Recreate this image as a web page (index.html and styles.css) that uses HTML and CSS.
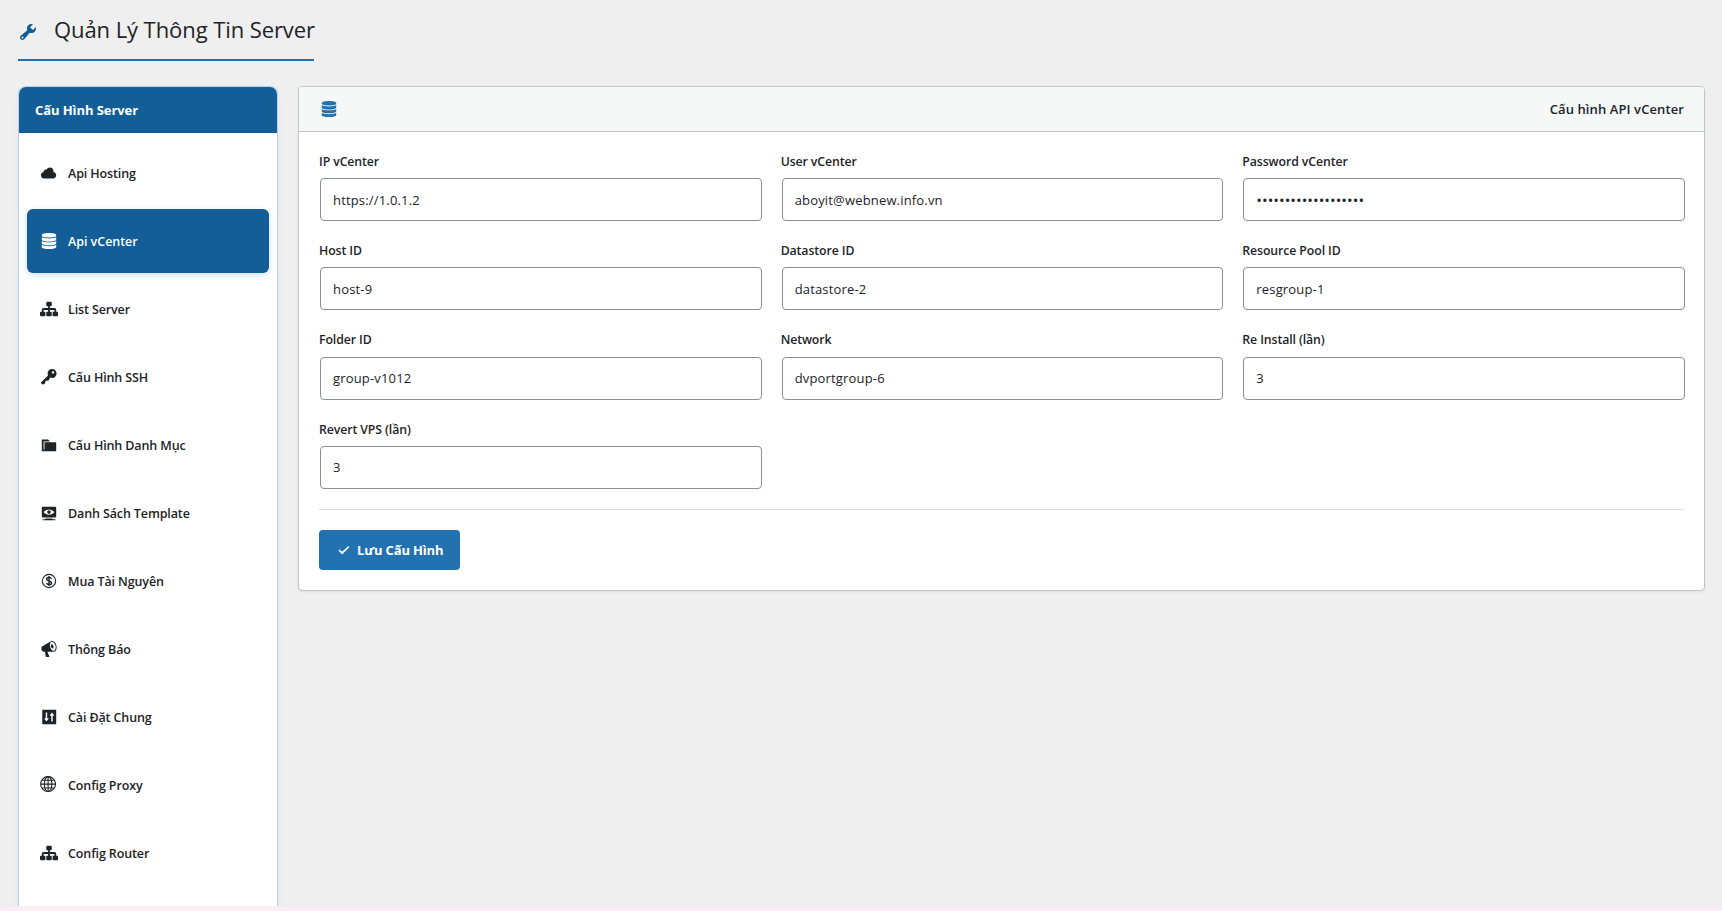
FILE: index.html
```html
<!DOCTYPE html>
<html lang="vi">

	<head>
		<meta charset="UTF-8">
		<title>Quản Lý Thông Tin Server</title>
		<link rel="stylesheet" href="styles.css">
	</head>

	<body>
		<!-- icons -->
		<svg class="sprite" xmlns="http://www.w3.org/2000/svg">
			<symbol id="i-tools" viewBox="0 0 20 20">
				<path d="M16.68 9.77c-1.34 1.34-3.3 1.67-4.95.99l-5.41 6.52c-.99.99-2.59.99-3.58 0s-.99-2.59 0-3.57l6.52-5.42c-.68-1.65-.35-3.61.99-4.95 1.28-1.28 3.12-1.62 4.72-1.06l-2.89 2.89 2.82 2.82 2.86-2.87c.53 1.58.18 3.39-1.08 4.65zM3.81 16.21c.4.39 1.04.39 1.43 0 .4-.4.4-1.04 0-1.43-.39-.4-1.03-.4-1.43 0-.39.39-.39 1.03 0 1.43z" />
			</symbol>
			<symbol id="i-cloud" viewBox="0 0 20 20">
				<path d="M14.9 9c1.8.2 3.1 1.7 3.1 3.5 0 1.9-1.6 3.5-3.5 3.5h-10C2.6 16 1 14.4 1 12.5 1 10.7 2.3 9.3 4.1 9 4 8.9 4 8.7 4 8.5 4 7.1 5.1 6 6.5 6c.3 0 .7.1.9.2C8.1 4.9 9.4 4 11 4c2.2 0 4 1.8 4 4 0 .4-.1.7-.1 1z" />
			</symbol>
			<symbol id="i-database" viewBox="0 0 20 20">
				<path d="M10 1c4.400 0 8 .9 8 2.300v.9c0 1-3.600 1.900-8 1.900s-8-.9-8-1.900v-.9C2 1.900 5.600 1 10 1z" />
				<path d="M2 5.600c1.500 1.100 4.500 1.600 8 1.600s6.500-.5 8-1.600v2.900c0 1.100-3.600 2-8 2s-8-.9-8-2z" />
				<path d="M2 9.900c1.500 1.100 4.500 1.600 8 1.600s6.500-.5 8-1.600v2.900c0 1.100-3.600 2-8 2s-8-.9-8-2z" />
				<path d="M2 14.200c1.500 1.100 4.500 1.600 8 1.600s6.500-.5 8-1.600v2.700c0 1.200-3.600 2.100-8 2.100s-8-.9-8-2.100z" />
			</symbol>
			<symbol id="i-networking" viewBox="0 0 20 20">
				<path d="M18 13h1c.55 0 1 .45 1 1.010v2.980c0 .56-.45 1.010-1 1.010h-4c-.55 0-1-.45-1-1.010v-2.980c0-.56.45-1.010 1-1.010h1v-2h-5v2h1c.55 0 1 .45 1 1.010v2.980c0 .56-.45 1.010-1 1.010H8c-.55 0-1-.45-1-1.010v-2.980c0-.56.45-1.010 1-1.010h1v-2H4v2h1c.55 0 1 .45 1 1.010v2.980C6 17.550 5.550 18 5 18H1c-.55 0-1-.45-1-1.010v-2.980C0 13.450.45 13 1 13h1v-2c0-1.100.9-2 2-2h5V7H8c-.55 0-1-.45-1-1.010V3.010C7 2.450 7.450 2 8 2h4c.55 0 1 .45 1 1.010v2.980C13 6.550 12.550 7 12 7h-1v2h5c1.100 0 2 .9 2 2v2z" />
			</symbol>
			<symbol id="i-key" viewBox="0 0 20 20">
				<path d="M16.950 2.580c1.960 1.950 1.960 5.120 0 7.070-1.510 1.510-3.750 1.840-5.590 1.010l-1.870 3.310-2.990.31L5 18H2l-1-2 7.950-7.690c-.92-1.870-.62-4.180.93-5.730 1.950-1.960 5.120-1.960 7.070 0zm-2.510 3.790c.74 0 1.330-.6 1.330-1.340 0-.73-.59-1.330-1.330-1.330-.73 0-1.330.6-1.330 1.330 0 .74.6 1.340 1.330 1.340z" />
			</symbol>
			<symbol id="i-category" viewBox="0 0 20 20">
				<path d="M5 7h13v10H2V4h7l2 2H4v9h1V7z" />
			</symbol>
			<symbol id="i-view" viewBox="0 0 20 20">
				<path d="M18 14V4c0-.55-.45-1-1-1H3c-.55 0-1 .45-1 1v10c0 .55.45 1 1 1h14c.55 0 1-.45 1-1zm-8-8c2.300 0 4.400 1.140 6 3-1.600 1.860-3.700 3-6 3s-4.400-1.140-6-3c1.600-1.860 3.700-3 6-3zm2 3c0-1.100-.9-2-2-2s-2 .9-2 2 .9 2 2 2 2-.9 2-2zm2 8h3v1H3v-1h3v-1h8v1z" />
			</symbol>
			<symbol id="i-money" viewBox="0 0 20 20">
				<g fill="none" stroke="currentColor">
					<circle cx="10" cy="10" r="7.400" stroke-width="1.200" />
					<path stroke-width="1.600" d="M12.700 7.600C12.400 6.500 11.400 6 10 6 8.500 6 7.400 6.700 7.400 7.900c0 2.800 5.300 1.300 5.300 4.200 0 1.200-1.200 1.900-2.700 1.900s-2.500-.6-2.800-1.800M10 4.500v11" />
				</g>
			</symbol>
			<symbol id="i-megaphone" viewBox="0 0 20 20">
				<path d="M18.150 5.940c.46 1.620.38 3.220-.02 4.480-.42 1.280-1.260 2.180-2.300 2.480-.16.06-.26.06-.4.06-.06.02-.12.02-.18.02-.06.02-.14.02-.22.02h-6.800l2.220 5.500c.02.14-.06.26-.14.34-.08.1-.24.16-.34.16H6.950c-.1 0-.26-.06-.34-.16-.08-.08-.16-.2-.14-.34l-1-5.500H4.250l-.02-.02c-.5.06-1.080-.18-1.540-.62s-.88-1.080-1.060-1.880c-.24-.8-.2-1.560-.02-2.200.18-.62.58-1.080 1.060-1.300l.02-.02 9-5.400c.1-.06.18-.1.24-.16.06-.04.14-.08.24-.12.16-.08.28-.12.5-.18 1.040-.3 2.240.1 3.220.98s1.840 2.240 2.260 3.860zm-2.580 5.980h-.02c.4-.1.74-.34 1.040-.7.58-.7.86-1.760.86-3.040 0-.64-.1-1.300-.28-1.980-.34-1.360-1.020-2.500-1.780-3.240s-1.680-1.100-2.460-.88c-.82.22-1.400.96-1.700 2-.32 1.040-.28 2.360.06 3.720.38 1.360 1 2.500 1.800 3.240.78.74 1.620 1.100 2.480.88zm-2.540-7.080c.22-.04.42-.02.62.04.38.16.76.48 1.020 1s.42 1.200.42 1.780c0 .3-.04.56-.12.8-.18.48-.44.84-.86.94-.34.1-.8-.06-1.140-.4s-.64-.86-.78-1.500c-.18-.62-.12-1.240.02-1.720s.48-.84.82-.94z" />
			</symbol>
			<symbol id="i-settings" viewBox="0 0 20 20">
				<path fill-rule="evenodd" d="M3 2h14.500q.5 0 .5.500v15q0 .500-.500.500H3q-.500 0-.500-.500v-15q0-.500.500-.500zM6.400 5v6.500H4.500L7.200 15l2.700-3.500H8V5zM12.500 15V8.500h-1.900L13.300 5 16 8.500h-1.900V15z" />
			</symbol>
			<symbol id="i-globe" viewBox="0 0 20 20">
				<g fill="none" stroke="currentColor" stroke-width="1.200">
					<circle cx="9" cy="9" r="8.300" />
					<ellipse cx="9" cy="9" rx="4.200" ry="8.300" />
					<path d="M9 .7v16.600M.7 9h16.600M2.100 4.700h13.800M2.100 13.300h13.800" />
				</g>
			</symbol>
			<symbol id="i-yes" viewBox="0 0 20 20">
				<path d="M15.300 5.900l1.200 1.200-7.400 7.400-3.600-3.700 1.200-1.400 2.400 2.400z" />
			</symbol>
		</svg>

		<div class="wrap">
			<h1 class="title"><svg class="icon"><use href="#i-tools" /></svg><span>Quản Lý Thông Tin Server</span></h1>

			<div class="container">
				<nav class="sidebar">
					<h3>Cấu Hình Server</h3>
					<ul class="menu">
						<li><a href="#"><svg class="icon"><use href="#i-cloud" /></svg>Api Hosting</a></li>
						<li><a class="active" href="#"><svg class="icon"><use href="#i-database" /></svg>Api vCenter</a></li>
						<li><a href="#"><svg class="icon"><use href="#i-networking" /></svg>List Server</a></li>
						<li><a href="#"><svg class="icon"><use href="#i-key" /></svg>Cấu Hình SSH</a></li>
						<li><a href="#"><svg class="icon"><use href="#i-category" /></svg>Cấu Hình Danh Mục</a></li>
						<li><a href="#"><svg class="icon"><use href="#i-view" /></svg>Danh Sách Template</a></li>
						<li><a href="#"><svg class="icon"><use href="#i-money" /></svg>Mua Tài Nguyên</a></li>
						<li><a href="#"><svg class="icon"><use href="#i-megaphone" /></svg>Thông Báo</a></li>
						<li><a href="#"><svg class="icon"><use href="#i-settings" /></svg>Cài Đặt Chung</a></li>
						<li><a href="#"><svg class="icon"><use href="#i-globe" /></svg>Config Proxy</a></li>
						<li><a href="#"><svg class="icon"><use href="#i-networking" /></svg>Config Router</a></li>
					</ul>
				</nav>

				<form class="card">
					<div class="card-header">
						<svg class="icon"><use href="#i-database" /></svg>
						<h2>Cấu hình API vCenter</h2>
					</div>
					<div class="card-body">
						<div class="grid">
							<div class="field">
								<label for="ip">IP vCenter</label>
								<input id="ip" type="text" value="https://1.0.1.2">
							</div>
							<div class="field">
								<label for="user">User vCenter</label>
								<input id="user" type="text" value="aboyit@webnew.info.vn">
							</div>
							<div class="field">
								<label for="pass">Password vCenter</label>
								<input id="pass" class="pass" type="text" value="•••••••••••••••••••">
							</div>
							<div class="field">
								<label for="host">Host ID</label>
								<input id="host" type="text" value="host-9">
							</div>
							<div class="field">
								<label for="datastore">Datastore ID</label>
								<input id="datastore" type="text" value="datastore-2">
							</div>
							<div class="field">
								<label for="pool">Resource Pool ID</label>
								<input id="pool" type="text" value="resgroup-1">
							</div>
							<div class="field">
								<label for="folder">Folder ID</label>
								<input id="folder" type="text" value="group-v1012">
							</div>
							<div class="field">
								<label for="network">Network</label>
								<input id="network" type="text" value="dvportgroup-6">
							</div>
							<div class="field">
								<label for="reinstall">Re Install (lần)</label>
								<input id="reinstall" type="text" value="3">
							</div>
							<div class="field">
								<label for="revert">Revert VPS (lần)</label>
								<input id="revert" type="text" value="3">
							</div>
						</div>
						<div class="actions">
							<button type="button"><svg class="icon"><use href="#i-yes" /></svg>Lưu Cấu Hình</button>
						</div>
					</div>
				</form>
			</div>
		</div>
		<div class="bottom"></div>
	</body>

</html>
```
FILE: styles.css
```css
* {
	box-sizing: border-box;
}

body {
	margin: 0;
	height: 911px;
	overflow: hidden;
	display: flex;
	flex-direction: column;
	background: #efefef;
	color: #1d2327;
	font: 13px/1.4 "Segoe UI", "Open Sans", "Noto Sans", sans-serif;
}

.sprite {
	display: none;
}

.icon {
	width: 18px;
	height: 18px;
	fill: currentColor;
	flex: none;
}

.wrap {
	height: 906px;
	padding: 0 17px 0 18px;
	overflow: hidden;
}

.bottom {
	height: 5px;
	background: #f9eef3;
}

.title {
	display: inline-flex;
	align-items: center;
	gap: 16px;
	width: 296px;
	height: 61px;
	margin: 0;
	border-bottom: 2px solid #2271b1;
	font-size: 22px;
	font-weight: 400;
	letter-spacing: -.08px;
	white-space: nowrap;
	vertical-align: top;
}

.title .icon {
	width: 20px;
	height: 20px;
	margin-top: 5px;
	color: #135e96;
}

.container {
	display: flex;
	align-items: flex-start;
	gap: 20px;
	margin-top: 25px;
}

.sidebar {
	width: 260px;
	height: 850px;
	flex: none;
	background: #fff;
	border: 1px solid #b5d3ee;
	border-radius: 8px;
	box-shadow: 0 2px 8px rgba(0, 0, 0, .04);
	overflow: hidden;
}

.sidebar h3 {
	height: 46px;
	margin: 0;
	padding: 0 16px;
	background: #135e96;
	color: #fff;
	font-size: 13px;
	line-height: 46px;
	font-weight: 700;
	letter-spacing: -.08px;
}

.menu {
	margin: 0;
	padding: 8px;
	list-style: none;
}

.menu li {
	margin-bottom: 4px;
}

.menu a {
	display: flex;
	align-items: center;
	gap: 10px;
	height: 64px;
	padding: 2px 13px 0;
	border-radius: 6px;
	color: #1d2327;
	font-size: 12.500px;
	font-weight: 600;
	letter-spacing: -.12px;
	text-decoration: none;
}

.menu .icon {
	margin-top: -2px;
}

.menu a.active {
	background: #135e96;
	color: #fff;
	letter-spacing: -.04px;
	box-shadow: 0 2px 6px rgba(19, 94, 150, .2);
}

.card {
	flex: 1;
	min-width: 0;
	background: #fff;
	border: 1px solid #c3c4c7;
	border-radius: 4px;
	box-shadow: 0 1px 3px rgba(0, 0, 0, .06);
	overflow: hidden;
}

.card-header {
	display: flex;
	align-items: center;
	justify-content: space-between;
	height: 45px;
	padding: 0 20px 0 21px;
	background: #f6f8f8;
	border-bottom: 1px solid #c3c4c7;
}

.card-header .icon {
	color: #2271b1;
}

.card-header h2 {
	margin: 0;
	font-size: 13px;
	font-weight: 600;
	letter-spacing: .1px;
}

.card-body {
	padding: 20px;
}

.grid {
	display: grid;
	grid-template-columns: repeat(3, 1fr);
	gap: 20px;
}

.field label {
	display: block;
	padding-top: 1px;
	margin-bottom: 7px;
	font-size: 12.300px;
	line-height: 18.200px;
	font-weight: 600;
	letter-spacing: -.1px;
}

.field input {
	display: block;
	width: 100%;
	height: 43px;
	margin: 0 1px;
	padding: 0 12px;
	border: 1px solid #8c8f94;
	border-radius: 4px;
	background: #fff;
	color: #1d2327;
	font: 13px "Segoe UI", "Open Sans", "Noto Sans", sans-serif;
	letter-spacing: .17px;
}

.field .pass {
	font-size: 15px;
	letter-spacing: .03px;
}

.actions {
	margin-top: 20px;
	padding-top: 20px;
	border-top: 1px solid #dcdcde;
}

.actions button {
	display: flex;
	align-items: center;
	gap: 4px;
	width: 141px;
	height: 40px;
	padding: 0 0 0 14px;
	border: 0;
	border-radius: 4px;
	background: #2271b1;
	color: #fff;
	font: 700 13px "Segoe UI", "Open Sans", "Noto Sans", sans-serif;
	letter-spacing: -.15px;
	white-space: nowrap;
}

.actions .icon {
	width: 20px;
	height: 20px;
}
```
